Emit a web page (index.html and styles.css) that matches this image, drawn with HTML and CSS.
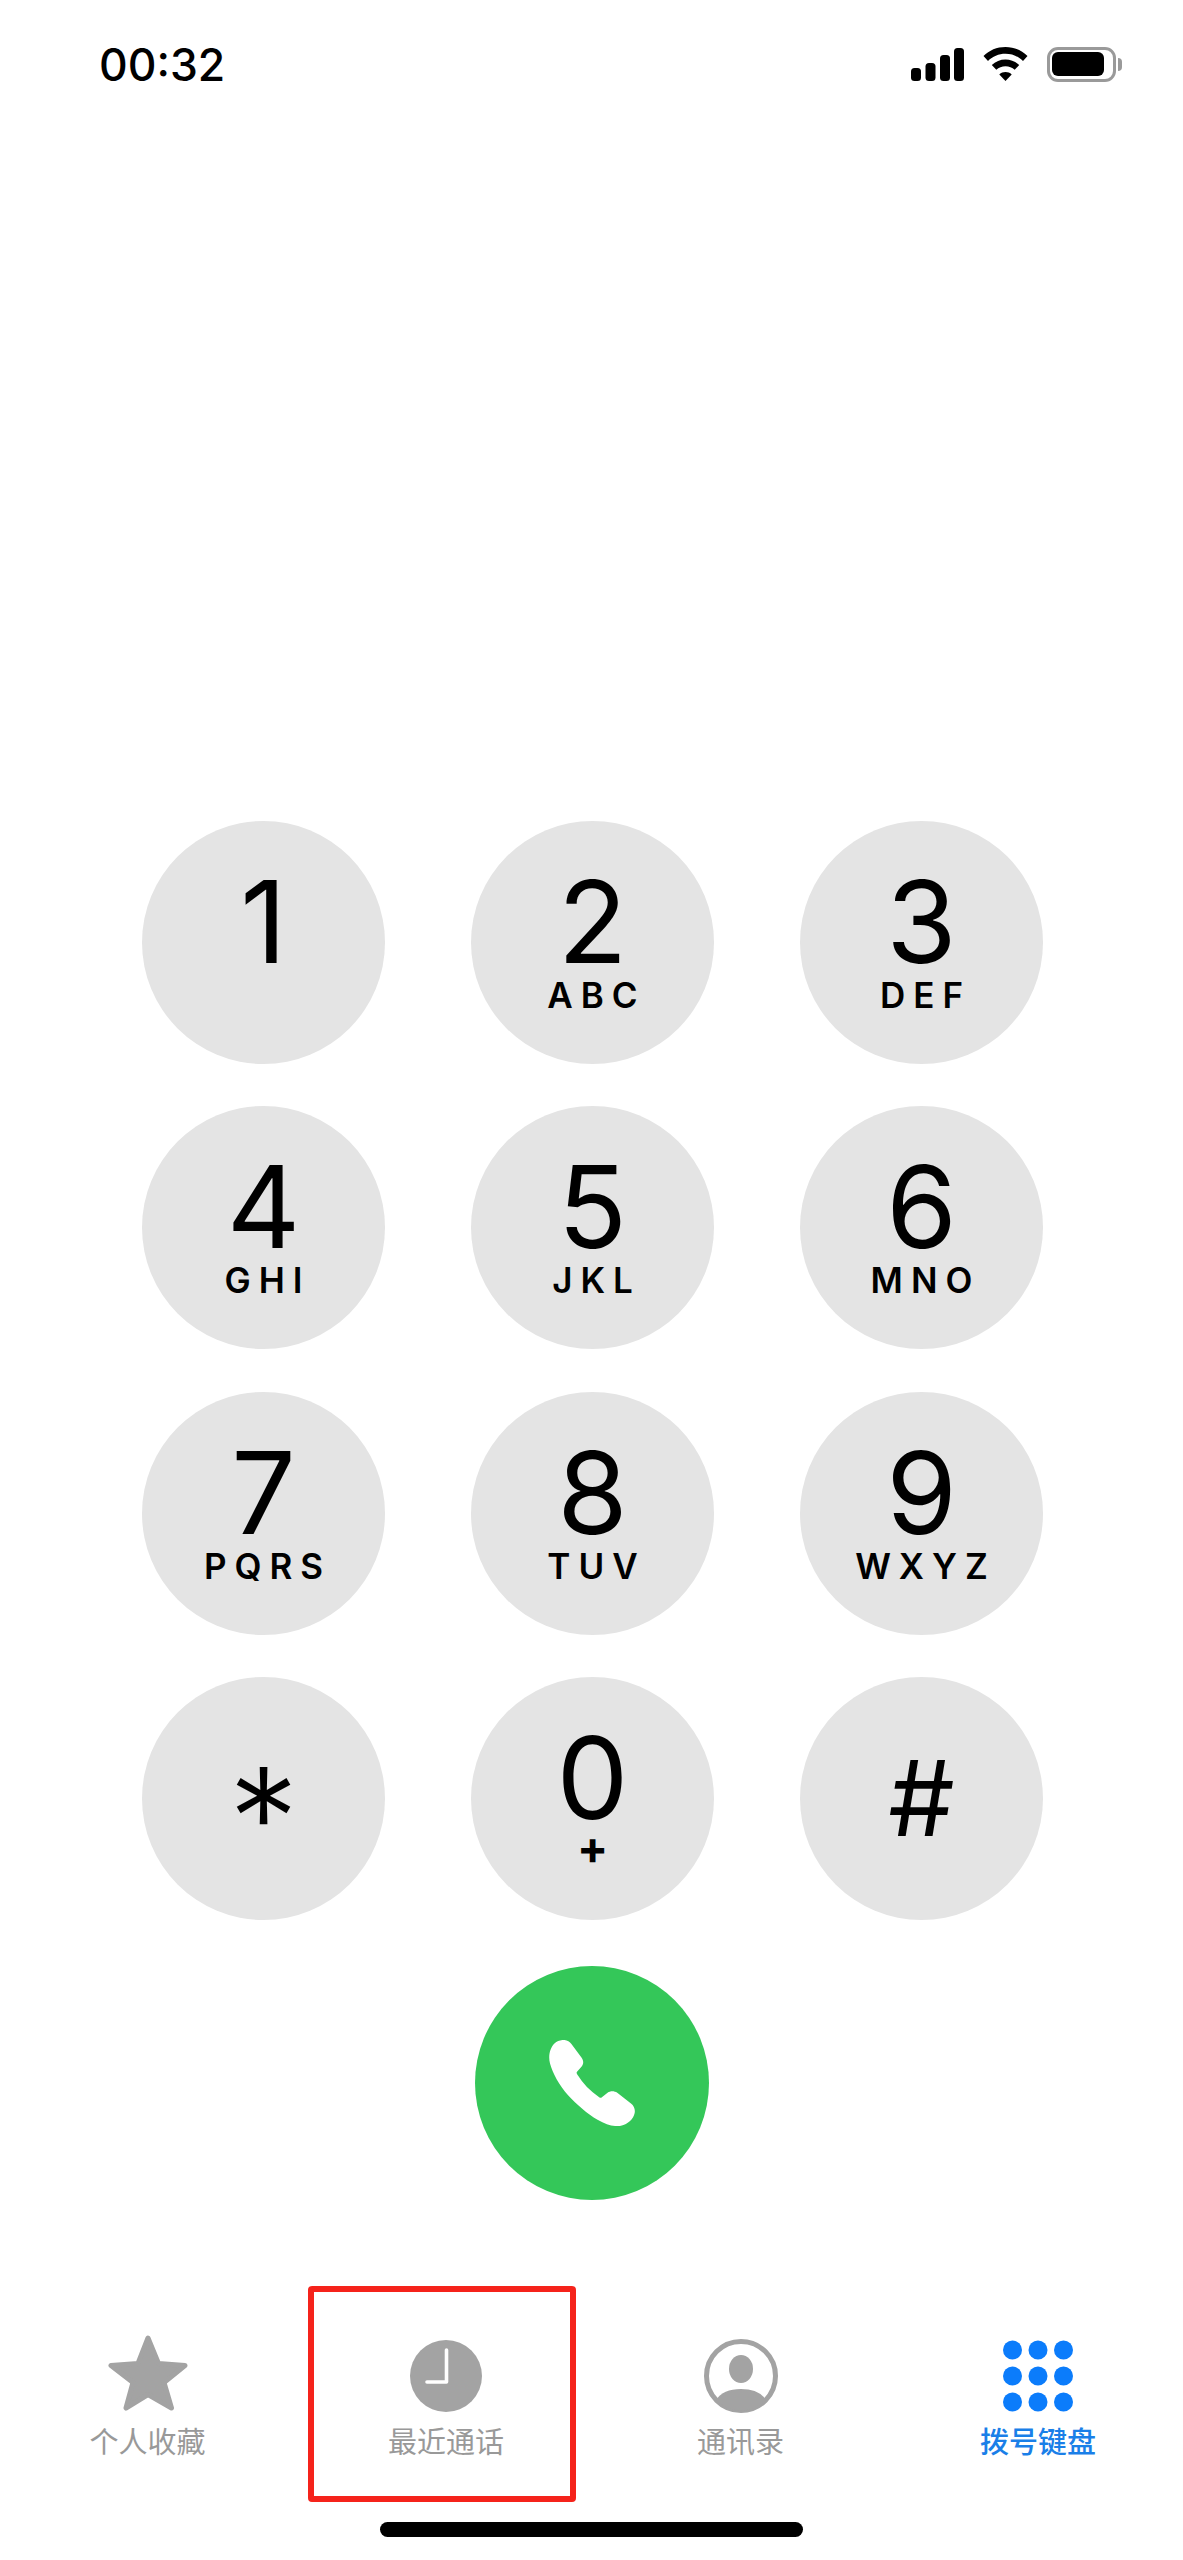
FILE: index.html
```html
<!DOCTYPE html>
<html lang="zh-CN">
<head>
<meta charset="utf-8">
<title>拨号键盘</title>
<link rel="stylesheet" href="styles.css">
</head>
<body>
<div class="phone">
  <header class="status">
    <span class="time">00:32</span>
    <div class="status-icons">
      <svg class="ic-signal" viewBox="0 0 53 33"><rect x="0" y="20" width="10" height="13" rx="3.5"/><rect x="14.5" y="15" width="10" height="18" rx="3.5"/><rect x="29" y="7" width="10" height="26" rx="3.5"/><rect x="43" y="0" width="10" height="33" rx="3.5"/></svg>
      <svg class="ic-wifi" viewBox="0 0 45 34"><path d="M22.5 0C13.800 0 6.300 3.300 0.500 9L5 14C9.500 9.500 15.700 6.800 22.500 6.800S35.500 9.500 40 14L44.500 9C38.700 3.300 31.200 0 22.500 0Z"/><path d="M22.500 12.500C17.300 12.500 12.500 14.500 8.800 18L13.300 22.800C15.700 20.500 19 19.200 22.500 19.200S29.300 20.500 31.700 22.800L36.200 18C32.500 14.500 27.700 12.500 22.500 12.500Z"/><path d="M22.500 25C20.200 25 18 25.800 16.300 27.400L22.500 34L28.700 27.400C27 25.800 24.800 25 22.500 25Z"/></svg>
      <div class="battery"><div class="battery-body"><div class="battery-fill"></div></div><div class="battery-nub"></div></div>
    </div>
  </header>

  <main class="keypad">
    <button class="key"><span class="digit">1</span></button>
    <button class="key"><span class="digit">2</span><span class="letters">ABC</span></button>
    <button class="key"><span class="digit">3</span><span class="letters">DEF</span></button>
    <button class="key"><span class="digit">4</span><span class="letters">GHI</span></button>
    <button class="key"><span class="digit">5</span><span class="letters">JKL</span></button>
    <button class="key"><span class="digit">6</span><span class="letters">MNO</span></button>
    <button class="key"><span class="digit">7</span><span class="letters">PQRS</span></button>
    <button class="key"><span class="digit">8</span><span class="letters">TUV</span></button>
    <button class="key"><span class="digit">9</span><span class="letters">WXYZ</span></button>
    <button class="key"><span class="digit symbol-star">*</span></button>
    <button class="key"><span class="digit">0</span><span class="letters plus">+</span></button>
    <button class="key"><span class="digit symbol-hash">#</span></button>
  </main>

  <div class="call-row">
    <button class="call">
      <svg class="ic-phone" viewBox="295 270 257 257"><path d="M335 270C346 269 356 273 362 282L392 322C399 332 399 342 392 350L378 366C377 368 378 371 380 374C396 400 418 423 445 441C448 443 451 443 453 441L470 428C478 422 490 422 499 428L540 460C549 467 553 477 551 488C548 505 531 522 510 526C490 530 468 524 440 508C410 491 378 463 352 435C326 405 306 370 298 340C292 318 298 293 312 280C318 274 326 271 335 270Z" fill="#fff"/></svg>
    </button>
  </div>

  <nav class="tabs">
    <a class="tab tab-favorites">
      <svg class="tab-icon" viewBox="0 0 80 80"><path class="fill" d="M40 3L50.500 28.500L77 30.500L56 47.500L63.500 73L40 59.500L18 73L25 47.500L3 30.500L30 28.500Z"/></svg>
      <span class="tab-label">个人收藏</span>
    </a>
    <a class="tab tab-recents">
      <svg class="tab-icon" viewBox="0 0 80 80"><circle cx="40" cy="41" r="36" fill="#a3a3a3"/><path d="M40.500 15V47H21" fill="none" stroke="#fff" stroke-width="3.600" stroke-linecap="round" stroke-linejoin="round"/></svg>
      <span class="tab-label">最近通话</span>
    </a>
    <a class="tab tab-contacts">
      <svg class="tab-icon" viewBox="0 0 80 80"><circle cx="40" cy="41" r="34.500" fill="none" stroke="#a3a3a3" stroke-width="5"/><ellipse cx="40" cy="34" rx="12" ry="14" fill="#a3a3a3"/><path d="M15 65Q22 54 40 54Q58 54 65 65A35 35 0 0 1 15 65Z" fill="#a3a3a3"/></svg>
      <span class="tab-label">通讯录</span>
    </a>
    <a class="tab tab-keypad active">
      <svg class="tab-icon" viewBox="0 0 80 80" fill="#0b7cfb"><circle cx="14.500" cy="15" r="9.500"/><circle cx="40" cy="15" r="9.500"/><circle cx="65.500" cy="15" r="9.500"/><circle cx="14.500" cy="41" r="9.500"/><circle cx="40" cy="41" r="9.500"/><circle cx="65.500" cy="41" r="9.500"/><circle cx="14.500" cy="67" r="9.500"/><circle cx="40" cy="67" r="9.500"/><circle cx="65.500" cy="67" r="9.500"/></svg>
      <span class="tab-label">拨号键盘</span>
    </a>
  </nav>

  <div class="home-indicator"></div>
  <div class="highlight"></div>
</div>
</body>
</html>
```
FILE: styles.css
```css
* { box-sizing: border-box; }
html, body { margin: 0; padding: 0; background: #fff; }
.phone {
  position: relative;
  width: 1183px;
  height: 2560px;
  overflow: hidden;
  background: #fff;
  font-family: Inter, "Noto Sans CJK SC", sans-serif;
  color: #000;
}

/* Status bar */
.status {
  display: flex;
  justify-content: space-between;
  align-items: flex-start;
  height: 100px;
  padding: 47px 61px 0 99px;
}
.time {
  font-size: 44.500px;
  line-height: 36px;
  font-weight: 550;
  letter-spacing: 0;
}
.status-icons { display: flex; align-items: flex-start; }
.ic-signal { width: 53px; height: 33px; margin-top: 1px; fill: #000; }
.ic-wifi { width: 45px; height: 34px; margin-left: 19px; fill: #000; }
.battery { display: flex; align-items: center; margin-left: 19px; }
.battery-body {
  width: 69px;
  height: 35px;
  border: 3px solid #9a9a9a;
  border-radius: 11px;
  padding: 2px 9px 3px 2px;
}
.battery-fill { width: 100%; height: 100%; background: #000; border-radius: 6px; }
.battery-nub {
  width: 4px;
  height: 13px;
  margin-left: 2px;
  background: #9a9a9a;
  border-radius: 0 6px 6px 0;
}

/* Keypad */
.keypad {
  display: grid;
  grid-template-columns: repeat(3, 243px);
  column-gap: 86px;
  row-gap: 42.300px;
  margin: 721px 0 0 142px;
}
.key {
  display: flex;
  flex-direction: column;
  align-items: center;
  width: 243px;
  height: 243px;
  padding: 59px 0 0;
  border: 0;
  border-radius: 50%;
  background: #e4e4e4;
  color: #000;
  font-family: inherit;
}
.digit {
  display: block;
  font-size: 114px;
  line-height: 84px;
  font-weight: 400;
}
.letters {
  display: block;
  margin-top: 19px;
  font-size: 35px;
  line-height: 25px;
  font-weight: 600;
  letter-spacing: 8px;
  margin-right: -8px;
}
.plus { font-size: 46px; margin-top: 15px; letter-spacing: 0; margin-right: 0; font-weight: 700; }
.symbol-star { font-size: 140px; line-height: 140px; margin-top: 12px; font-weight: 300; }
.symbol-hash { font-size: 105px; line-height: 84px; margin-top: 20px; }

/* Call button */
.call-row { display: flex; justify-content: center; margin-top: 46px; }
.call {
  display: flex;
  align-items: center;
  justify-content: center;
  width: 234px;
  height: 234px;
  padding: 0;
  border: 0;
  border-radius: 50%;
  background: #34c759;
}
.ic-phone { width: 86px; height: 86px; }

/* Tabs */
.tabs { display: flex; margin-top: 135px; }
.tab { display: flex; flex-direction: column; align-items: center; width: 200px; flex: none; }
.tab-favorites { margin-left: 47.500px; }
.tab-recents { margin-left: 98.500px; }
.tab-contacts { margin-left: 94.500px; }
.tab-keypad { margin-left: 97.500px; }
.tab-icon { width: 80px; height: 80px; display: block; }
.fill { fill: #a3a3a3; stroke: #a3a3a3; stroke-width: 5; stroke-linejoin: round; }
.tab-label {
  margin-top: 5px;
  font-family: "Noto Sans CJK SC", sans-serif;
  font-size: 29px;
  line-height: 40px;
  color: #999;
}
.active .tab-label { color: #1a7fe8; font-weight: 500; }

/* Home indicator */
.home-indicator {
  width: 423px;
  height: 15px;
  margin: 62px 0 0 380px;
  background: #000;
  border-radius: 8px;
}

/* Annotation */
.highlight {
  position: absolute;
  left: 308px;
  top: 2286px;
  width: 268px;
  height: 216px;
  border: 6px solid #f5231b;
  border-radius: 4px;
}
```
